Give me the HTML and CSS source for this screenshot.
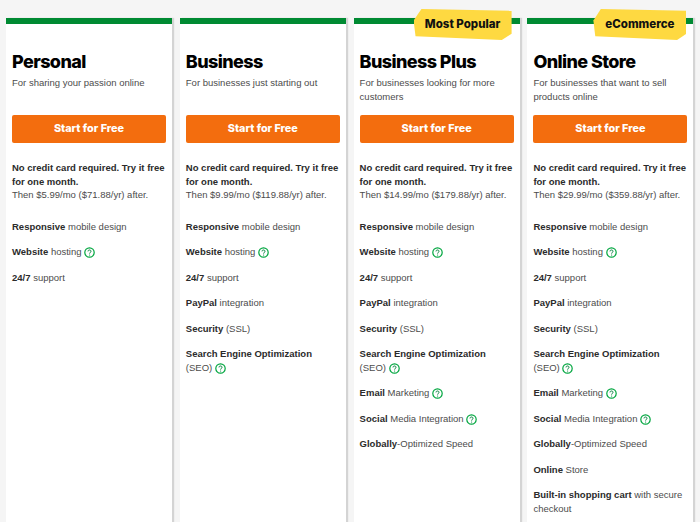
FILE: index.html
```html
<!DOCTYPE html>
<html lang="en">
<head>
<meta charset="utf-8">
<title>Plans</title>
<link rel="stylesheet" href="styles.css">
</head>
<body>
<svg class="defs" width="0" height="0" aria-hidden="true">
  <symbol id="help" viewBox="0 0 11 11">
    <circle cx="5.5" cy="5.5" r="4.7" fill="none" stroke="#00a63f" stroke-width="1.2"/>
    <path d="M4 4.4c0-.9.7-1.4 1.5-1.4s1.5.5 1.5 1.3c0 1.1-1.4 1.2-1.4 2.3" fill="none" stroke="#00803a" stroke-width="1"/>
    <circle cx="5.6" cy="8" r=".6" fill="#00803a"/>
  </symbol>
</svg>
<main class="plans">
  <section class="card">
    <h2 class="name">Personal</h2>
    <p class="tagline">For sharing your passion online</p>
    <a class="cta">Start for Free</a>
    <p class="offer"><b>No credit card required. Try it free for one month.</b><br>Then $5.99/mo ($71.88/yr) after.</p>
    <ul class="features">
      <li><b>Responsive</b> mobile design</li>
      <li><b>Website</b> hosting <svg class="help"><use href="#help"/></svg></li>
      <li><b>24/7</b> support</li>
    </ul>
  </section>
  <section class="card">
    <h2 class="name">Business</h2>
    <p class="tagline">For businesses just starting out</p>
    <a class="cta">Start for Free</a>
    <p class="offer"><b>No credit card required. Try it free for one month.</b><br>Then $9.99/mo ($119.88/yr) after.</p>
    <ul class="features">
      <li><b>Responsive</b> mobile design</li>
      <li><b>Website</b> hosting <svg class="help"><use href="#help"/></svg></li>
      <li><b>24/7</b> support</li>
      <li><b>PayPal</b> integration</li>
      <li><b>Security</b> (SSL)</li>
      <li><b>Search Engine Optimization</b> (SEO) <svg class="help"><use href="#help"/></svg></li>
    </ul>
  </section>
  <section class="card">
    <div class="badge badge-popular">Most Popular</div>
    <h2 class="name">Business Plus</h2>
    <p class="tagline">For businesses looking for more customers</p>
    <a class="cta">Start for Free</a>
    <p class="offer"><b>No credit card required. Try it free for one month.</b><br>Then $14.99/mo ($179.88/yr) after.</p>
    <ul class="features">
      <li><b>Responsive</b> mobile design</li>
      <li><b>Website</b> hosting <svg class="help"><use href="#help"/></svg></li>
      <li><b>24/7</b> support</li>
      <li><b>PayPal</b> integration</li>
      <li><b>Security</b> (SSL)</li>
      <li><b>Search Engine Optimization</b> (SEO) <svg class="help"><use href="#help"/></svg></li>
      <li><b>Email</b> Marketing <svg class="help"><use href="#help"/></svg></li>
      <li><b>Social</b> Media Integration <svg class="help"><use href="#help"/></svg></li>
      <li><b>Globally</b>-Optimized Speed</li>
    </ul>
  </section>
  <section class="card">
    <div class="badge badge-store">eCommerce</div>
    <h2 class="name">Online Store</h2>
    <p class="tagline">For businesses that want to sell products online</p>
    <a class="cta">Start for Free</a>
    <p class="offer"><b>No credit card required. Try it free for one month.</b><br>Then $29.99/mo ($359.88/yr) after.</p>
    <ul class="features">
      <li><b>Responsive</b> mobile design</li>
      <li><b>Website</b> hosting <svg class="help"><use href="#help"/></svg></li>
      <li><b>24/7</b> support</li>
      <li><b>PayPal</b> integration</li>
      <li><b>Security</b> (SSL)</li>
      <li><b>Search Engine Optimization</b> (SEO) <svg class="help"><use href="#help"/></svg></li>
      <li><b>Email</b> Marketing <svg class="help"><use href="#help"/></svg></li>
      <li><b>Social</b> Media Integration <svg class="help"><use href="#help"/></svg></li>
      <li><b>Globally</b>-Optimized Speed</li>
      <li><b>Online</b> Store</li>
      <li><b>Built-in shopping cart</b> with secure checkout</li>
    </ul>
  </section>
</main>
</body>
</html>
```
FILE: styles.css
```css
html, body {
  margin: 0;
  height: 522px;
  overflow: hidden;
  background: #f5f5f5;
}
body {
  font-family: "Liberation Sans", Arial, sans-serif;
  font-size: 9.5px;
  line-height: 13.5px;
  color: #4c4c4c;
}
.defs {
  position: absolute;
}
.plans {
  display: grid;
  grid-template-columns: repeat(4, 166px);
  column-gap: 7.8px;
  padding: 18px 0 0 6px;
  height: 522px;
  box-sizing: border-box;
}
.card {
  position: relative;
  background: #fff;
  border-top: 6px solid #008a32;
  box-shadow: 2px 0 1px #d4d4d4;
  padding: 27px 6px 0;
}
.name {
  margin: 0;
  font-family: Inter, sans-serif;
  font-weight: 800;
  font-size: 18px;
  letter-spacing: -0.6px;
  line-height: 22px;
  color: #000;
}
.tagline {
  margin: 3px 0 0;
  height: 28px;
}
.cta {
  display: block;
  margin-top: 11px;
  height: 28px;
  line-height: 28px;
  background: #f36d0e;
  border-radius: 2px;
  color: #fff;
  font-family: Inter, sans-serif;
  font-weight: 800;
  font-size: 10.8px;
  text-align: center;
}
.offer {
  margin: 18px 0 0;
}
.offer b, .features b {
  color: #2b2b2b;
}
.features {
  list-style: none;
  margin: 18px 0 0;
  padding: 0;
}
.features li {
  margin-top: 12px;
}
.help {
  width: 11px;
  height: 11px;
  vertical-align: -3px;
}
.badge {
  position: absolute;
  top: -15px;
  height: 31px;
  line-height: 30px;
  background: #fed941;
  color: #111;
  font-family: Inter, sans-serif;
  font-weight: 800;
  font-size: 11.5px;
  text-align: center;
  clip-path: polygon(8% 0, 100% 6%, 100% 80%, 90% 100%, 2% 88%, 0 37%);
}
.badge-popular {
  right: 8px;
  width: 98px;
}
.badge-store {
  right: 7px;
  width: 93px;
}
```
